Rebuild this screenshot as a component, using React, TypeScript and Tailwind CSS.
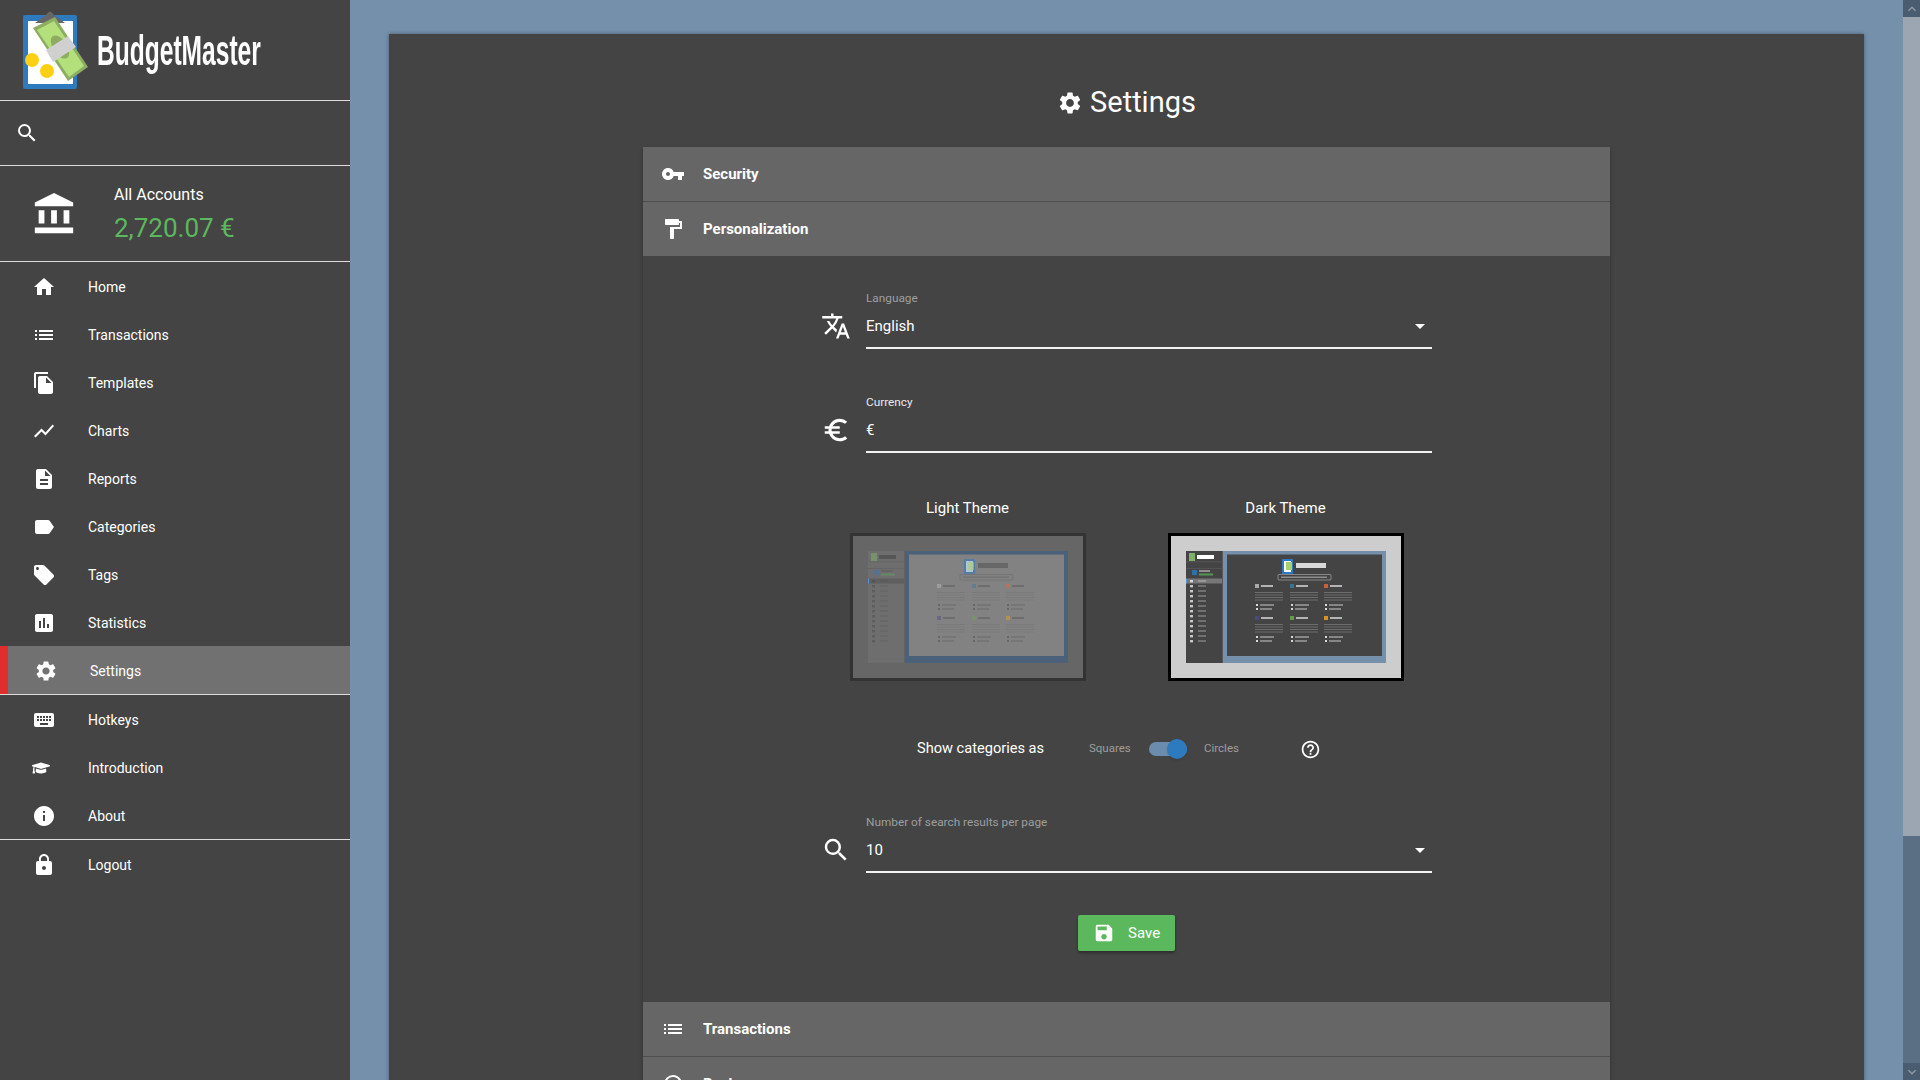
import type { ReactNode } from "react";
import {
  MdAccountBalance, MdArrowDropDown, MdAssessment, MdDescription, MdEuroSymbol, MdFileCopy,
  MdFormatPaint, MdHelpOutline, MdHome, MdInfo, MdKeyboard, MdKeyboardArrowDown, MdKeyboardArrowUp,
  MdLabel, MdList, MdLocalOffer, MdLock, MdSave, MdSearch, MdSettings, MdSettingsBackupRestore,
  MdShowChart, MdTranslate, MdVpnKey,
} from "react-icons/md";
import { FaGraduationCap } from "react-icons/fa";

const Logo = () => (
  <svg viewBox="20 8 72 82" className="h-[82px] w-[72px] shrink-0">
    <rect x="23" y="15" width="54" height="74" rx="2" fill="#2e7abf" />
    <rect x="28" y="21" width="45" height="63" fill="#fff" />
    <path d="M35 23 L46 15 Q50 8 54 15 L65 23 Z" fill="#666" />
    <polygon points="33,28 55,17 88,67 68,81" fill="#8dae62" />
    <polygon points="37,30 54,21 84,66 69,77" fill="#b4e07c" />
    <ellipse cx="60" cy="47" rx="7" ry="13" transform="rotate(-33 60 47)" fill="#8dae62" />
    <polygon points="46,50 68,36 76,47 53,62" fill="#d0d0d0" />
    <circle cx="32" cy="60" r="7" fill="#ffcf14" />
    <circle cx="47" cy="71" r="7" fill="#ffcf14" />
  </svg>
);

type ThumbColors = {
  side: string;
  blue: string;
  card: string;
  line: string;
  active: string;
  rule: string;
  dim: number;
};

const cols = [69, 104, 138];

const ThemeThumb = ({ c }: { c: ThumbColors }) => (
  <svg viewBox="0 0 200 112" className="h-[112px] w-[200px] blur-[0.5px]">
    <rect width="200" height="112" fill={c.blue} />
    <rect width="36" height="112" fill={c.side} />
    <rect x="36" width="1" height="112" fill={c.rule} />
    <rect x="41" y="3.5" width="155" height="101.5" fill={c.card} />
    {/* sidebar */}
    <rect x="3" y="2" width="6" height="8" fill="#7fb06a" opacity={c.dim} />
    <rect x="11" y="4" width="17" height="4" fill={c.line} opacity={c.dim} />
    {[10.5, 17, 28].map((y) => (
      <rect key={y} y={y} width="36" height="0.7" fill={c.rule} />
    ))}
    <rect x="6" y="19" width="5" height="5" fill="#2e7abf" opacity={c.dim * 0.8} />
    <rect x="13" y="19" width="11" height="2" fill={c.line} opacity={c.dim * 0.4} />
    <rect x="13" y="22.5" width="14" height="2" fill="#5cb85c" opacity={c.dim * 0.7} />
    <rect y="27.5" width="36" height="5" fill={c.active} />
    <rect width="1" x="0" y="27.5" height="5" fill="#5b93c9" />
    {[30, 35, 40, 45, 50, 55, 60, 65, 70, 75, 80, 85, 90].map((y) => (
      <g key={y}>
        <rect x="4" y={y - 1} width="3" height="2.4" fill={c.line} opacity={c.dim * 0.7} />
        <rect x="12" y={y - 0.6} width="8" height="1.2" fill={c.line} opacity={c.dim * 0.4} />
      </g>
    ))}
    {/* logo + pill */}
    <rect x="96" y="8" width="11" height="15" fill="#2e7abf" opacity={c.dim} />
    <rect x="98" y="10" width="7" height="11" fill="#fff" opacity={c.dim} />
    <rect x="100" y="11" width="6" height="8" fill="#a7d26e" opacity={c.dim} />
    <rect x="110" y="12" width="30" height="5" fill={c.line} opacity={c.dim * 0.8} />
    <rect x="92" y="23.5" width="53" height="5.5" rx="1" fill="none" stroke={c.line} strokeWidth="0.6" opacity={c.dim * 0.6} />
    <rect x="95" y="25.5" width="46" height="1.5" fill={c.line} opacity={c.dim * 0.4} />
    {/* columns */}
    {[35, 67].map((y, r) =>
      cols.map((x, i) => (
        <g key={`${r}${i}`}>
          <rect x={x} y={y - 2} width="4" height="4" fill={[["#bbb", "#3a7a9f", "#e0663c"], ["#4a4a8a", "#6aa84f", "#f0a020"]][r][i]} opacity={c.dim * 0.85} />
          <rect x={x + 6} y={y - 1} width="12" height="2" fill={c.line} opacity={c.dim * 0.6} />
          {[6, 8.5, 11, 13.5].map((d) => (
            <rect key={d} x={x} y={y + d} width="28" height="1" fill={c.line} opacity={c.dim * 0.22} />
          ))}
          <rect x={x + 1} y={y + 18} width="2" height="2" fill={c.line} opacity={c.dim * 0.8} />
          <rect x={x + 5} y={y + 18.3} width="14" height="1.4" fill={c.line} opacity={c.dim * 0.5} />
          <rect x={x + 1} y={y + 22} width="2" height="2" fill={c.line} opacity={c.dim * 0.8} />
          <rect x={x + 5} y={y + 22.3} width="12" height="1.4" fill={c.line} opacity={c.dim * 0.5} />
        </g>
      ))
    )}
  </svg>
);

const darkThumb: ThumbColors = {
  side: "#444444", blue: "#7490ab", card: "#444444",
  line: "#ffffff", active: "#777777", rule: "#5a5a5a", dim: 1,
};
const lightThumb: ThumbColors = {
  side: "#6e6e6e", blue: "#4b6079", card: "#828282",
  line: "#444444", active: "#5f5f5f", rule: "#626262", dim: 0.55,
};

const NavItem = ({ icon, label, low }: { icon: ReactNode; label: string; low?: boolean }) => (
  <div className={low ? "flex h-[48px] items-center pt-[2px] text-sm text-white" : "flex h-[48px] items-center text-sm text-white"}>
    <div className="flex w-[88px] justify-start pl-[32px]">{icon}</div>
    <span>{label}</span>
  </div>
);

const iconCls = "text-white";

const AccordionHeader = ({ icon, label, open }: { icon: ReactNode; label: string; open?: boolean }) => (
  <div
    className={
      open
        ? "flex h-[54px] items-center bg-[#666666] pl-[18px] text-[15px] font-bold text-white"
        : "flex h-[55px] items-center border-b border-[#4e4e4e] bg-[#666666] pl-[18px] text-[15px] font-bold text-white"
    }
  >
    <div className="w-[42px]">{icon}</div>
    <span>{label}</span>
  </div>
);

const Field = ({ icon, label, value, dim, caret }: { icon: ReactNode; label: string; value: string; dim?: boolean; caret?: boolean }) => (
  <div className="mx-auto flex w-[611px] items-center">
    <div className="mt-[13px] flex w-[45px] text-white">{icon}</div>
    <div className="flex-1">
      <div className={`h-[16px] text-[11.8px] leading-4 ${dim ? "text-[#9e9e9e]" : "text-[#e8e8e8]"}`}>{label}</div>
      <div className="flex h-[41px] items-center justify-between pb-[1px] text-[15px] text-white">
        <span>{value}</span>
        {caret && <MdArrowDropDown size={24} />}
      </div>
      <div className="h-[2px] bg-[#f2f2f2]" />
    </div>
  </div>
);

const ThemeOption = ({ label, c, selected }: { label: string; c: ThumbColors; selected?: boolean }) => (
  <div className="flex w-[236px] flex-col items-center">
    <div className="mb-[15px] h-[20px] text-[15px] leading-5 text-white">{label}</div>
    <div
      className={
        selected
          ? "flex h-[148px] w-[236px] items-center justify-center border-[3px] border-black bg-[#cdcdcd]"
          : "flex h-[148px] w-[236px] items-center justify-center border-[3px] border-[#333333] bg-[#666666]"
      }
    >
      <ThemeThumb c={c} />
    </div>
  </div>
);

export default function App() {
  return (
    <div className="flex h-screen w-full overflow-hidden bg-[#7490ab] font-['Roboto',sans-serif]">
      <aside className="h-full w-[350px] shrink-0 bg-[#444444]">
        <div className="flex h-[101px] items-start border-b border-[#dddddd] pl-[20px] pt-[8px]">
          <Logo />
          <div className="ml-[5px] mt-[17px] w-[162px] origin-left scale-x-[0.585] whitespace-nowrap font-['Liberation_Sans',sans-serif] text-[42px] font-bold leading-[52px] text-white">
            BudgetMaster
          </div>
        </div>
        <div className="flex h-[65px] items-center border-b border-[#dddddd] pl-[15px]">
          <MdSearch size={24} className={iconCls} />
        </div>
        <div className="flex h-[96px] items-center border-b border-[#dddddd]">
          <div className="w-[114px] pl-[31px]">
            <MdAccountBalance size={46} className={iconCls} />
          </div>
          <div>
            <div className="text-base leading-6 text-white">All Accounts</div>
            <div className="mt-[5px] text-[26px] leading-8 text-[#5cb85c]">2,720.07 €</div>
          </div>
        </div>
        <NavItem low icon={<MdHome size={24} className={iconCls} />} label="Home" />
        <NavItem low icon={<MdList size={24} className={iconCls} />} label="Transactions" />
        <NavItem low icon={<MdFileCopy size={24} className={iconCls} />} label="Templates" />
        <NavItem low icon={<MdShowChart size={24} className={iconCls} />} label="Charts" />
        <NavItem low icon={<MdDescription size={24} className={iconCls} />} label="Reports" />
        <NavItem low icon={<MdLabel size={24} className={iconCls} />} label="Categories" />
        <NavItem low icon={<MdLocalOffer size={24} className={iconCls} />} label="Tags" />
        <NavItem low icon={<MdAssessment size={24} className={iconCls} />} label="Statistics" />
        <div className="flex h-[49px] items-center border-b border-[#dddddd] bg-[#717171] text-sm text-white">
          <div className="h-full w-[8px] bg-[#e02d2d]" />
          <div className="w-[82px] pl-[26px] pt-[1px]">
            <MdSettings size={24} className={iconCls} />
          </div>
          <span className="pt-[1px]">Settings</span>
        </div>
        <div className="h-px" />
        <NavItem icon={<MdKeyboard size={24} className={iconCls} />} label="Hotkeys" />
        <NavItem icon={<FaGraduationCap size={18} className={iconCls} />} label="Introduction" />
        <NavItem icon={<MdInfo size={24} className={iconCls} />} label="About" />
        <div className="-mt-px h-px bg-[#dddddd]" />
        <div className="h-px" />
        <NavItem icon={<MdLock size={24} className={iconCls} />} label="Logout" />
      </aside>

      <main className="flex min-w-0 flex-1 justify-center pt-[34px]">
        <section className="h-[1200px] w-[1475px] shrink-0 bg-[#444444] pt-[49px] shadow-[0_0_4px_rgba(0,0,0,0.35)]">
          <h1 className="flex h-[40px] items-center justify-center text-[29px] font-normal text-white">
            <MdSettings size={26} className="mr-[7px]" />
            Settings
          </h1>
          <div className="mx-auto mt-[24px] w-[967px] shadow-[0_2px_4px_rgba(0,0,0,0.3)]">
            <AccordionHeader icon={<MdVpnKey size={24} />} label="Security" />
            <AccordionHeader open icon={<MdFormatPaint size={24} />} label="Personalization" />
            <div className="h-[746px] bg-[#444444] pt-[34px]">
              <Field icon={<MdTranslate size={30} />} label="Language" value="English" dim caret />
              <div className="h-[45px]" />
              <Field icon={<MdEuroSymbol size={30} />} label="Currency" value="€" />
              <div className="mt-[45px] flex justify-center gap-[82px]">
                <ThemeOption label="Light Theme" c={lightThumb} />
                <ThemeOption label="Dark Theme" c={darkThumb} selected />
              </div>
              <div className="mx-auto mt-[56px] flex h-[24px] w-[611px] items-center pl-[96px]">
                <span className="w-[172px] text-[14.6px] text-white">Show categories as</span>
                <span className="w-[60px] text-[11.5px] text-[#9e9e9e]">Squares</span>
                <div className="relative h-[14px] w-[38px] rounded-full bg-[#6c8cae]">
                  <div className="absolute -top-[3px] right-0 h-[20px] w-[20px] rounded-full bg-[#2e7abf] shadow" />
                </div>
                <span className="ml-[17px] w-[96px] text-[11.5px] text-[#9e9e9e]">Circles</span>
                <MdHelpOutline size={21} className="text-white" />
              </div>
              <div className="h-[53px]" />
              <Field icon={<MdSearch size={30} />} label="Number of search results per page" value="10" dim caret />
              <div className="mt-[42px] flex justify-center">
                <button className="flex h-[36px] w-[97px] items-center rounded-[2px] bg-[#5cb85c] pl-[15px] text-[15px] text-white shadow-[0_2px_3px_rgba(0,0,0,0.35)]">
                  <MdSave size={22} className="mr-[13px]" />
                  Save
                </button>
              </div>
            </div>
            <AccordionHeader icon={<MdList size={24} />} label="Transactions" />
            <AccordionHeader icon={<MdSettingsBackupRestore size={24} />} label="Backup" />
          </div>
        </section>
      </main>

      <div className="flex h-full w-[17px] shrink-0 flex-col bg-[#5a6e84]">
        <div className="flex h-[17px] items-center justify-center bg-[#4a5c70]">
          <MdKeyboardArrowUp size={16} className="text-[#8d9aa7]" />
        </div>
        <div className="h-[819px] bg-[#9ba6b1]" />
        <div className="flex-1" />
        <div className="flex h-[17px] items-center justify-center bg-[#4a5c70]">
          <MdKeyboardArrowDown size={16} className="text-[#8d9aa7]" />
        </div>
      </div>
    </div>
  );
}
